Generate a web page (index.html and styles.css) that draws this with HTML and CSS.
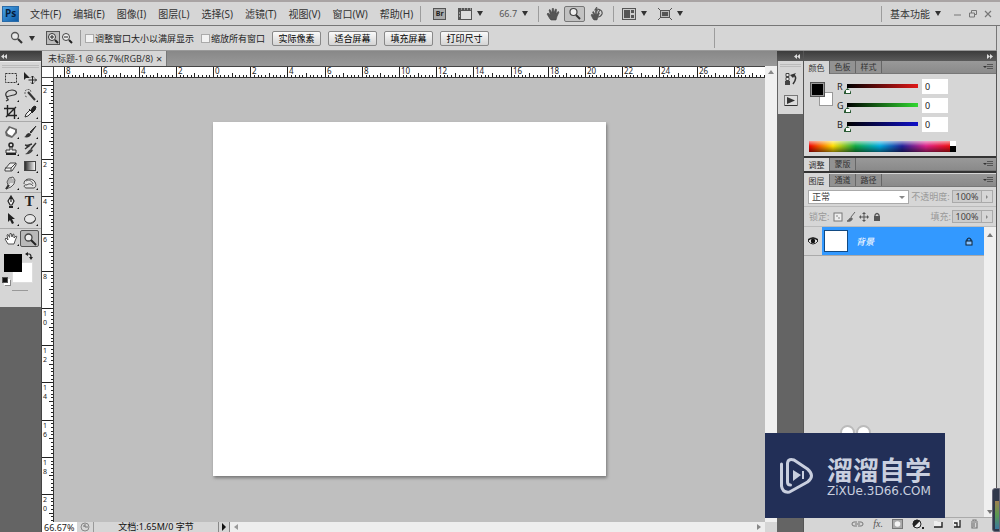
FILE: index.html
```html
<!DOCTYPE html>
<html lang="zh-CN">
<head>
<meta charset="utf-8">
<title>未标题-1 @ 66.7%(RGB/8)</title>
<link rel="stylesheet" href="styles.css">
</head>
<body>
<div class="app">
  <header class="menubar">
    <div class="logo">Ps</div>
    <nav class="menus">
      <button>文件(F)</button><button>编辑(E)</button><button>图像(I)</button><button>图层(L)</button><button>选择(S)</button><button>滤镜(T)</button><button>视图(V)</button><button>窗口(W)</button><button>帮助(H)</button>
    </nav>
    <div class="apptools">
      <i class="vsep"></i>
      <button class="bridge" aria-label="Bridge">Br</button>
      <button class="drop" aria-label="查看额外内容"><svg width="14" height="12" viewBox="0 0 14 12"><rect x=".5" y=".5" width="13" height="11" fill="#ddd" stroke="#555"/><path d="M0 0h14v3H0zM0 3h3v9H0z" fill="#555"/><path d="M3 1h1m2 0h1m2 0h1m2 0h1M1 5h1M1 8h1" stroke="#ddd"/></svg><b class="arrow"></b></button>
      <button class="drop zoomlevel">66.7<b class="arrow"></b></button>
      <i class="vsep"></i>
    </div>
    <div class="viewtools">
      <button aria-label="抓手"><svg width="14" height="14" viewBox="0 0 14 14"><path d="M4 12 1 7l1-1 2.500 2-1.500-5 1-.5L6 6 6.200 1.500h1.300L8 6l1.500-4 1 .4L10 7l2-2.500 1 .6-2 4.400-1 3.500H5z" fill="#555" stroke="#444" stroke-width=".6"/></svg></button>
      <button class="on" aria-label="缩放"><svg width="14" height="14" viewBox="0 0 14 14"><circle cx="5.500" cy="5" r="3.500" fill="#eee" stroke="#444" stroke-width="1.200"/><path d="m8 8 4 4" stroke="#333" stroke-width="2"/></svg></button>
      <button aria-label="旋转视图"><svg width="14" height="14" viewBox="0 0 14 14"><path d="M3 12 1 8l1-1 2 1.500L2.500 5l1-.5L5.500 8 5.500 4h1v4l2-2.500 1 .5L8 10l-1 3H4z" fill="#555" stroke="#444" stroke-width=".5"/><path d="M5 3c3-2 8 0 7 4-1 2-2 3-4 3M7 0 5 3l3 1M10 3 8 6" fill="none" stroke="#555" stroke-width="1.200"/></svg></button>
      <i class="vsep"></i>
    </div>
    <div class="arrange">
      <button class="drop" aria-label="排列文档"><svg width="14" height="12" viewBox="0 0 14 12"><rect x=".5" y=".5" width="13" height="11" fill="#ccc" stroke="#555"/><path d="M2 2h6v8H2zM9 2h3v3H9zM9 7h3v3H9z" fill="#555"/></svg><b class="arrow"></b></button>
      <button class="drop" aria-label="屏幕模式"><svg width="14" height="12" viewBox="0 0 14 12"><rect x="2.500" y="2.500" width="9" height="7" fill="#bbb" stroke="#555"/><path d="M4 4h6v4H4z" fill="#555"/><path d="m0 0 3 3M14 0l-3 3M0 12l3-3M14 12l-3-3" stroke="#555"/></svg><b class="arrow"></b></button>
    </div>
    <div class="wincontrols">
      <i class="vsep"></i>
      <button class="drop workspace-name">基本功能<b class="arrow"></b></button>
      <button class="win" aria-label="最小化"><svg width="8" height="8" viewBox="0 0 8 8"><path d="M0 5h7" stroke="#777"/></svg></button>
      <button class="win" aria-label="还原"><svg width="8" height="8" viewBox="0 0 8 8"><path d="M2.500 3V.5h5v4H6M.5 3h5v4h-5z" fill="none" stroke="#777"/></svg></button>
      <button class="win" aria-label="关闭"><svg width="8" height="8" viewBox="0 0 8 8"><path d="m1 1 6 6M7 1 1 7" stroke="#777" stroke-width="1.200"/></svg></button>
    </div>
  </header>

  <section class="options">
    <button class="drop preset" aria-label="缩放工具预设"><svg width="14" height="14" viewBox="0 0 14 14"><circle cx="5" cy="5" r="3.500" fill="#e8e8e8" stroke="#555" stroke-width="1.300"/><path d="m8 8 4 4" stroke="#333" stroke-width="2.200"/></svg><b class="arrow"></b></button>
    <div class="zoompair">
      <button class="on" aria-label="放大"><svg width="12" height="12" viewBox="0 0 12 12"><circle cx="5" cy="5" r="3.500" fill="#eee" stroke="#333"/><path d="M3 5h4M5 3v4" stroke="#222"/><path d="m8 8 3 3" stroke="#222" stroke-width="2"/></svg></button>
      <button aria-label="缩小"><svg width="12" height="12" viewBox="0 0 12 12"><circle cx="5" cy="5" r="3.500" fill="#eee" stroke="#444"/><path d="M3 5h4" stroke="#222"/><path d="m8 8 3 3" stroke="#222" stroke-width="2"/></svg></button>
    </div>
    <i class="vsep"></i>
    <label class="check"><input type="checkbox">调整窗口大小以满屏显示</label>
    <label class="check second"><input type="checkbox">缩放所有窗口</label>
    <div class="fits"><button>实际像素</button><button>适合屏幕</button><button>填充屏幕</button><button>打印尺寸</button></div>
    <i class="vsep far"></i>
  </section>

  <main class="body">
    <aside class="tools">
      <div class="dockhead"><svg width="6" height="5" viewBox="0 0 6 5"><path d="m3 0-3 2.500 3 2.500zM6 0 3 2.500 6 5z" fill="#ddd"/></svg></div>
      <div class="toolpanel">
        <i class="grip"></i>
        <div class="toolgroup">
          <button class="more" aria-label="矩形选框"><svg viewBox="0 0 14 14"><rect x="1.500" y="2.500" width="11" height="9" fill="none" stroke="#333" stroke-dasharray="2 1"/></svg></button>
          <button aria-label="移动"><svg viewBox="0 0 14 14"><path d="M1 1v8l2-2h4z" fill="#222"/><path d="M9.500 5v8M5.500 9h8M8 6.500 9.500 5 11 6.500M8 11.500 9.500 13 11 11.500M12 7.500 13.500 9 12 10.500" fill="none" stroke="#222"/></svg></button>
          <button class="more" aria-label="套索"><svg viewBox="0 0 14 14"><path d="M3 9C0 6 3 2 8 2s6 4 2 5-6 1-7 2c-1 2 2 2 1 3l-2 1" fill="none" stroke="#333" stroke-width="1.200"/></svg></button>
          <button class="more" aria-label="魔棒"><svg viewBox="0 0 14 14"><path d="m5 4 7 8" stroke="#333" stroke-width="2"/><path d="M2 6V3l2-1.500h3L8 4M2 8l2 1" fill="none" stroke="#666" stroke-dasharray="2 1"/></svg></button>
          <button class="more" aria-label="裁剪"><svg viewBox="0 0 14 14"><path d="M3.500 0v10.500H13M0 3.500h10.500V14M2 12 12 2" fill="none" stroke="#222" stroke-width="1.400"/></svg></button>
          <button class="more" aria-label="吸管"><svg viewBox="0 0 14 14"><path d="m2 12 1-3 4-4 2 2-4 4z" fill="#eee" stroke="#333"/><path d="m6 4 4 4M8 5l2-3 2-1 1 1-1 3-2 2z" fill="#222" stroke="#222"/></svg></button>
        </div>
        <div class="toolgroup">
          <button class="more" aria-label="修复画笔"><svg viewBox="0 0 14 14"><path d="m1 7 4-6 8 3v4l-5 5-6-2z" fill="#666"/><path d="m3 7 3-4 5 2v2l-3 4-4-2z" fill="#fff"/></svg></button>
          <button class="more" aria-label="画笔"><svg viewBox="0 0 14 14"><path d="M13 1 7 7l1 1z" fill="#444" stroke="#333"/><path d="M1 12c2 0 2-4 5-4l2 1c0 3-4 4-7 3z" fill="#333"/></svg></button>
          <button class="more" aria-label="仿制图章"><svg viewBox="0 0 14 14"><circle cx="7" cy="3" r="2" fill="#ddd" stroke="#222" stroke-width="1.500"/><path d="M6 5h2v3h4v3H2V8h4z" fill="#eee" stroke="#333"/><path d="M2 12h10" stroke="#222" stroke-width="2"/></svg></button>
          <button class="more" aria-label="历史画笔"><svg viewBox="0 0 14 14"><path d="M13 1 8 7M2 3l4 1-4 3M3 4l6-2" fill="none" stroke="#333" stroke-width="1.400"/><path d="M2 12c2 0 3-4 6-5l2 1c-1 3-5 5-8 4z" fill="#444"/></svg></button>
          <button class="more" aria-label="橡皮擦"><svg viewBox="0 0 14 14"><path d="m1 10 5-6h6v2l-4 6H1z" fill="#eee" stroke="#444"/><path d="m1 9 6 0 5-5M7 9v3" fill="none" stroke="#444"/></svg></button>
          <button class="more" aria-label="渐变"><svg viewBox="0 0 14 14"><defs><linearGradient id="gr"><stop stop-color="#222"/><stop offset="1" stop-color="#fff"/></linearGradient></defs><rect x="1.500" y="2.500" width="11" height="9" fill="url(#gr)" stroke="#444"/></svg></button>
          <button class="more" aria-label="涂抹"><svg viewBox="0 0 14 14"><path d="m2 13 2-4-1-3 2-4 4-1 2 3-1 4-3 3z" fill="#e4e4e4" stroke="#555"/><path d="M5 3v5M7 2v5M9 3v4" stroke="#888"/><path d="m2 13 3-4" stroke="#333" stroke-width="2"/></svg></button>
          <button class="more" aria-label="海绵"><svg viewBox="0 0 14 14"><path d="M1 8c0-5 5-6 9-4 3 2 4 7 1 8H3c-3-1-2-4 1-3 2-2 5-1 6 1" fill="#e4e4e4" stroke="#444"/><path d="M3 5c3-2 6 0 7 3" fill="none" stroke="#666"/></svg></button>
        </div>
        <div class="toolgroup">
          <button class="more" aria-label="钢笔"><svg viewBox="0 0 14 14"><path d="M7 1v6M7 1 4 6l2 4h2l2-4z" fill="#eee" stroke="#222" stroke-width="1.200"/><path d="M5 12h4" stroke="#222" stroke-width="2"/></svg></button>
          <button class="more type" aria-label="文字">T</button>
          <button class="more" aria-label="路径选择"><svg viewBox="0 0 14 14"><path d="M4 1v9l2-2 2 4 2-1-2-4h3z" fill="#222"/></svg></button>
          <button class="more" aria-label="椭圆"><svg viewBox="0 0 14 14"><ellipse cx="7" cy="7" rx="5.500" ry="4.500" fill="#e8e8e8" stroke="#444"/><path d="M3 10q5 3 9-2" fill="none" stroke="#555"/></svg></button>
        </div>
        <div class="toolgroup">
          <button class="more" aria-label="抓手工具"><svg viewBox="0 0 14 14"><path d="M4 12 1 7l1-1 2 2-1-5 1-.6 1.500 3L6 1.500h1.200L8 5l1-3 1 .4V6l2-2 .8.500L11 9l-1 3z" fill="#fff" stroke="#444" stroke-width=".9"/></svg></button>
          <button class="on" aria-label="缩放工具"><svg viewBox="0 0 14 14"><circle cx="5.500" cy="5.500" r="3.500" fill="#eee" stroke="#444" stroke-width="1.300"/><path d="m8 8 5 5" stroke="#222" stroke-width="2"/></svg></button>
        </div>
        <div class="colors">
          <i class="bg"></i><i class="fg"></i>
          <svg class="swap" width="8" height="8" viewBox="0 0 8 8"><path d="M1 2h3q2 0 2 3" fill="none" stroke="#222" stroke-width="1.200"/><path d="M3 0v4L0 2zM4 5h4L6 8z" fill="#222"/></svg>
          <i class="mini"></i>
        </div>
        <i class="maskline"></i>
      </div>
    </aside>

    <section class="document">
      <div class="tabs"><div class="doctab">未标题-1 @ 66.7%(RGB/8)<button aria-label="关闭文档">×</button></div></div>
      <div class="docgrid">
        <div class="corner"></div>
        <svg class="ruler hruler" id="hruler"></svg>
        <svg class="ruler vruler" id="vruler"></svg>
        <div class="stage"><div class="sheet" id="sheet"></div></div>
        <div class="scroll vscroll"><svg width="6" height="4" viewBox="0 0 6 4"><path d="M0 4 3 0l3 4z" fill="#888"/></svg></div>
      </div>
      <footer class="status">
        <input class="pct" value="66.67%" aria-label="显示比例">
        <svg class="clock" width="10" height="10" viewBox="0 0 10 10"><circle cx="5" cy="5" r="4" fill="none" stroke="#888"/><path d="M5 2v3h3M3 4h2" fill="none" stroke="#777"/></svg>
        <div class="docsize">文档:1.65M/0 字节</div>
        <button class="play" aria-label="状态栏选项"><svg width="4" height="8" viewBox="0 0 4 8"><path d="m0 0 4 4-4 4z" fill="#111"/></svg></button>
        <div class="hscroll"><svg width="4" height="6" viewBox="0 0 4 6"><path d="M4 0 0 3l4 3z" fill="#999"/></svg><svg width="4" height="6" viewBox="0 0 4 6"><path d="m0 0 4 3-4 3z" fill="#888"/></svg></div>
      </footer>
    </section>

    <aside class="icondock">
      <div class="dockhead right"><svg width="6" height="5" viewBox="0 0 6 5"><path d="m3 0-3 2.500 3 2.500zM6 0 3 2.500 6 5z" fill="#ddd"/></svg></div>
      <div class="iconpanel">
        <i class="grip"></i>
        <button aria-label="历史记录"><svg width="12" height="14" viewBox="0 0 12 14"><path d="M1 1.500h3v3H1zM1 5.500h3v3H1z" fill="#eee" stroke="#444"/><path d="M0 9h5v4H0z" fill="#444"/><path d="M8 3c4 1 3 5 0 9" fill="none" stroke="#333" stroke-width="1.500"/><path d="M5 3 11 1 8 6z" fill="#333"/></svg></button>
        <button aria-label="动作"><svg width="14" height="11" viewBox="0 0 14 11"><rect x=".5" y=".5" width="13" height="10" fill="#ddd" stroke="#777"/><path d="m3 2 8 3.500L3 9z" fill="#333"/><path d="M1 10.500h12" stroke="#333"/></svg></button>
      </div>
    </aside>

    <aside class="panels">
      <div class="dockhead right"><svg width="6" height="5" viewBox="0 0 6 5"><path d="m0 0 3 2.500L0 5zM3 0l3 2.500L3 5z" fill="#ddd"/></svg></div>
      <section class="panel">
        <div class="ptabs"><button class="active">颜色</button><button>色板</button><button>样式</button><svg class="pmenu" width="10" height="6" viewBox="0 0 10 6"><path d="M0 2h4L2 4z" fill="#333"/><path d="M4 .5h6M4 2.500h6M4 4.500h6" stroke="#555"/></svg></div>
        <div class="colorbody">
          <div class="swatches"><i class="bg"></i><i class="fg"></i></div>
          <div class="sliders">
            <div class="srow"><label for="r">R</label><input id="r" class="red" type="range" min="0" max="255" value="0"><input type="text" value="0" aria-label="R 值"></div>
            <div class="srow"><label for="g">G</label><input id="g" class="green" type="range" min="0" max="255" value="0"><input type="text" value="0" aria-label="G 值"></div>
            <div class="srow"><label for="b">B</label><input id="b" class="blue" type="range" min="0" max="255" value="0"><input type="text" value="0" aria-label="B 值"></div>
          </div>
        </div>
        <div class="spectrum"><i class="hues"></i><i class="ends"></i></div>
      </section>
      <section class="panel">
        <div class="ptabs"><button class="active">调整</button><button>蒙版</button><svg class="pmenu" width="10" height="6" viewBox="0 0 10 6"><path d="M0 2h4L2 4z" fill="#333"/><path d="M4 .5h6M4 2.500h6M4 4.500h6" stroke="#555"/></svg></div>
      </section>
      <section class="panel layers">
        <div class="ptabs"><button class="active">图层</button><button>通道</button><button>路径</button><svg class="pmenu" width="10" height="6" viewBox="0 0 10 6"><path d="M0 2h4L2 4z" fill="#333"/><path d="M4 .5h6M4 2.500h6M4 4.500h6" stroke="#555"/></svg></div>
        <div class="lrow">
          <div class="selectwrap"><select aria-label="混合模式"><option>正常</option></select></div>
          <label for="op">不透明度:</label><div class="stepper"><input id="op" type="text" value="100%"><button aria-label="调整不透明度"></button></div>
        </div>
        <div class="lrow locks">
          <span class="dim">锁定:</span>
          <svg width="10" height="10" viewBox="0 0 10 10"><rect x="1" y="1" width="8" height="8" fill="#eee" stroke="#777"/><path d="M3 3h2v2H3zM5 5h2v2H5z" fill="#bbb"/></svg>
          <svg width="10" height="10" viewBox="0 0 10 10"><path d="M9 0 5 5M1 9c2 0 2-4 5-3 1 2-2 4-5 3z" fill="#666" stroke="#666"/></svg>
          <svg width="10" height="10" viewBox="0 0 10 10"><path d="M5 1v8M1 5h8" stroke="#555"/><path d="M5 0 3 2h4zM5 10 3 8h4zM0 5l2-2v4zM10 5 8 3v4z" fill="#555"/></svg>
          <svg width="10" height="10" viewBox="0 0 10 10"><path d="M3 5V3q2-3 4 0v2" fill="none" stroke="#555" stroke-width="1.300"/><path d="M2 4h6v5H2z" fill="#555"/></svg>
          <label class="fill" for="fi">填充:</label><div class="stepper"><input id="fi" type="text" value="100%"><button aria-label="调整填充"></button></div>
        </div>
        <div class="listwrap">
          <div class="list">
            <div class="layer">
              <button class="eye" aria-label="可见性"><svg width="10" height="8" viewBox="0 0 10 8"><path d="M0 4q5-6 10 0-5 6-10 0z" fill="#fff" stroke="#222"/><circle cx="5" cy="4" r="2.300" fill="#111"/><path d="M0 3q5-4 10 0" fill="none" stroke="#222" stroke-width="1.500"/></svg></button>
              <div class="layerbody"><i class="thumb"></i><em>背景</em><svg width="8" height="9" viewBox="0 0 8 9"><path d="M2 4V2.500q2-3 4 0V4" fill="none" stroke="#123" stroke-width="1.200"/><rect x="1" y="4" width="6" height="4" fill="#8bc4ff" stroke="#123"/></svg></div>
            </div>
          </div>
          <div class="scroll lscroll"><svg width="6" height="4" viewBox="0 0 6 4"><path d="M0 4 3 0l3 4z" fill="#777"/></svg><svg width="6" height="4" viewBox="0 0 6 4"><path d="m0 0 3 4 3-4z" fill="#777"/></svg></div>
        </div>
        <div class="lfoot">
          <svg width="13" height="10" viewBox="0 0 13 10"><path d="M6 3H3Q1 3 1 5t2 2h3M7 3h3q2 0 2 2t-2 2H7M4 5h5" fill="none" stroke="#777"/></svg>
          <span class="fx">fx.</span>
          <svg width="11" height="10" viewBox="0 0 11 10"><rect x=".5" y=".5" width="10" height="9" fill="#aaa" stroke="#777"/><circle cx="5.500" cy="5" r="2.800" fill="#f4f4f4"/></svg>
          <svg width="12" height="10" viewBox="0 0 12 10"><circle cx="5" cy="5" r="4" fill="#eee" stroke="#222"/><path d="M2 8A4 4 0 0 1 8 2z" fill="#222"/><path d="M10 8h2v2h-2z" fill="#222"/></svg>
          <svg width="10" height="8" viewBox="0 0 10 8"><path d="M1 1h3l1 1h4v5H1z" fill="#eee"/><path d="M1 7h8V2" fill="none" stroke="#222" stroke-width="1.400"/></svg>
          <svg width="9" height="9" viewBox="0 0 9 9"><path d="M1 1h7v7H5L1 5z" fill="#eee"/><path d="M8 1v7H2M5 8V4H2" fill="none" stroke="#222" stroke-width="1.300"/></svg>
          <svg width="9" height="10" viewBox="0 0 9 10"><path d="M1 3h7M3 2V1h3v1M2 4v5h5V4M4 4v4" fill="none" stroke="#777" stroke-width="1.200"/></svg>
        </div>
      </section>
    </aside>
  </main>

  <div class="ears"><i></i><i></i></div>
  <div class="brand">
    <svg width="36" height="38" viewBox="0 0 36 38"><g fill="none" stroke="#c9cfdf" stroke-width="3" stroke-linecap="round" stroke-linejoin="round"><path d="M2.500 7v22q1 7 8 6l18-10q8-6 0-13L15 3Q8 1 8.500 8v17q0 3 3 3"/></g><path d="m14 13 8 5-8 6zM23 14h2v8h-2z" fill="#c9cfdf"/></svg>
    <div class="brandtext"><strong>溜溜自学</strong><span>ZiXUe.3D66.COM</span></div>
  </div>
  <div class="gadget"><i></i></div>
</div>
<script src="rulers.js"></script>
</body>
</html>
```

FILE: styles.css
```css
* { box-sizing: border-box; }
body { margin: 0; font: 9px/1 "Noto Sans", "Noto Sans CJK SC", sans-serif; color: #222; overflow: hidden; }
button, input, select { font: inherit; color: inherit; margin: 0; padding: 0; border: 0; background: none; border-radius: 0; line-height: 1; }
svg { display: block; flex: none; }
i { display: block; }
.app { position: relative; height: 100vh; display: flex; flex-direction: column; background: #d6d6d6; padding-right: 3px; }

.menubar { flex: none; height: 26px; display: flex; align-items: center; border-top: 2px solid #a9a4a4; border-bottom: 1px solid #777; padding-left: 2px; margin-right: -3px; }
.menubar, .menubar button { white-space: nowrap; }
.logo { width: 17px; height: 16px; background: linear-gradient(135deg, #4aa3e6, #0d5aa5); border: 1px solid #2a6ba8; color: #061e3c; font: bold 10px/13px "Open Sans", sans-serif; text-align: center; }
.menus { display: flex; gap: 12px; margin-left: 11px; font-size: 10px; color: #333; }
.vsep { width: 1px; height: 16px; background: #9c9c9c; flex: none; }
.arrow { width: 0; height: 0; border: 3px solid transparent; border-top: 5px solid #333; border-bottom: 0; }
.apptools, .viewtools, .arrange, .wincontrols, .drop { display: flex; align-items: center; }
.drop { gap: 5px; }
.apptools { margin-left: 7px; gap: 12px; }
.bridge { width: 13px; height: 12px; border: 1px solid #555; background: #aaa; font-size: 7px; font-weight: bold; }
.zoomlevel { color: #555; margin-left: 4px; }
.viewtools { gap: 4px; margin-left: 6px; }
.apptools .vsep:last-child { margin-left: -2px; }
.viewtools button { height: 16px; width: 15px; display: grid; place-items: center; }
.viewtools button.on { width: 21px; border: 1px solid #777; background: #c2c2c2; border-radius: 2px; }
.viewtools .vsep { margin-left: 5px; }
.arrange { gap: 11px; margin-left: 8px; }
.wincontrols { margin-left: auto; padding-right: 8px; gap: 8px; }
.workspace-name { font-size: 10px; color: #333; margin-right: 5px; }
.win { width: 8px; }
.win + .win { margin-left: -1px; }

.options { flex: none; height: 25px; display: flex; align-items: center; padding-left: 10px; border-bottom: 1px solid #999; border-right: 1px solid #777; white-space: nowrap; }
.zoompair { display: flex; align-items: center; margin: 0 6px 0 11px; }
.zoompair button { width: 14px; height: 14px; display: grid; place-items: center; }
.zoompair .on { border: 1px solid #555; background: #bbb; }
.check { display: flex; align-items: center; gap: 1px; margin-left: 4px; }
.check.second { margin-left: 7px; }
.check input { appearance: none; width: 9px; height: 9px; border: 1px solid #aaa; background: #f2f2f2; }
.fits { display: flex; gap: 7px; margin-left: 7px; }
.fits button { width: 49px; height: 15px; border: 1px solid #888; border-radius: 2px; background: linear-gradient(#fafafa, #d4d4d4); color: #000; }
.options .far { margin-left: 225px; height: 20px; }

.body { flex: 1; min-height: 0; display: flex; }
.dockhead { flex: none; height: 10px; background: linear-gradient(#3c3c3c, #5a5a5a); display: flex; align-items: center; padding: 0 1px; }
.dockhead.right { justify-content: flex-end; padding-right: 3px; }
.tools { width: 41px; flex: none; background: #646464; }
.toolpanel { background: #d6d6d6; padding-bottom: 16px; border-top: 1px solid #eee; }
.grip { height: 3px; margin: 3px 2px 0; border: solid #bbb; border-width: 1px 0; }
.toolpanel .grip { margin-bottom: 1px; }
.toolgroup { display: grid; grid-template-columns: 19px 19px; grid-auto-rows: 17px; padding: 0 0 1px 1px; border-bottom: 1px solid #aaa; }
.toolgroup button { position: relative; display: grid; place-items: center; }
.toolgroup svg { width: 14px; height: 14px; }
.toolgroup .more::after { content: ""; position: absolute; right: 1px; bottom: 1px; border: 1px solid transparent; border-right-color: #111; border-bottom-color: #111; }
.toolgroup .on { border: 1px solid #555; background: #b9b9b9; border-radius: 2px; }
.toolgroup .type { font: bold 14px/1 "Liberation Serif", serif; }
.toolgroup:nth-of-type(4) { border-bottom: 0; padding-top: 1px; }
.toolgroup:nth-of-type(2) { padding-top: 1px; }
.colors { position: relative; height: 34px; margin-top: 3px; }
.colors i, .colors svg, .swatches i { position: absolute; }
.colors .fg { left: 4px; top: 3px; width: 18px; height: 18px; background: #000; }
.colors .bg { left: 12px; top: 11px; width: 21px; height: 21px; background: #fff; border: 1px solid #ddd; }
.swap { left: 25px; top: 1px; }
.mini { left: 2px; top: 26px; width: 6px; height: 6px; background: #111; border: 1px solid #555; box-shadow: 2px 2px #fff, 3px 3px #888; }
.maskline { height: 1px; width: 16px; margin: 5px 0 0 12px; background: #999; }

.document { flex: 1; min-width: 0; display: flex; flex-direction: column; border-left: 1px solid #444; }
.tabs { flex: none; height: 15px; background: linear-gradient(#888, #999); display: flex; }
.doctab { display: flex; align-items: center; background: #d6d6d6; padding: 0 4px 0 6px; gap: 3px; border-right: 1px solid #777; color: #333; white-space: nowrap; }
.doctab button { font-size: 11px; }
.docgrid { flex: 1; min-height: 0; display: grid; grid-template: 12px 1fr / 12px 1fr 12px; }
.corner { background: #fff; border: solid #444; border-width: 1px 1px 1px 0; }
.ruler { width: 100%; height: 100%; background: #fff; overflow: hidden; font: 8px "Noto Sans", sans-serif; fill: #222; }
.ruler path { stroke: #222; fill: none; shape-rendering: crispEdges; }
.hruler { border-top: 1px solid #444; border-bottom: 1px solid #333; }
.vruler { border-right: 1px solid #333; grid-row: 2; grid-column: 1; }
.vruler text { font-size: 7px; }
.stage { grid-row: 2; grid-column: 2; background: #bfbfbf; display: flex; align-items: center; justify-content: center; overflow: hidden; padding-bottom: 2px; }
.sheet { width: 393px; height: 354px; flex: none; background: #fff; box-shadow: 1px 2px 3px #777; }
.scroll { background: #f0f0f0; }
.vscroll { grid-row: 1 / 3; grid-column: 3; display: flex; justify-content: center; padding-top: 4px; }
.status { flex: none; height: 10px; display: flex; align-items: center; background: #d6d6d6; overflow: hidden; }
.pct { width: 35px; height: 10px; background: #fff; padding-left: 2px; }
.clock { margin: 0 3px 0 3px; }
.docsize { width: 125px; height: 10px; line-height: 10px; text-align: center; border-left: 1px solid #999; color: #111; }
.play { width: 12px; height: 10px; display: grid; place-items: center; border: solid #888; border-width: 0 1px; }
.hscroll { flex: 1; height: 10px; background: #eee; display: flex; align-items: center; justify-content: space-between; padding: 0 4px; margin-right: 12px; }

.icondock { width: 26px; flex: none; background: #646464; display: flex; flex-direction: column; }
.iconpanel { height: 53px; background: #d6d6d6; margin-left: 1px; display: flex; flex-direction: column; align-items: center; }
.iconpanel .grip { align-self: stretch; }
.iconpanel button { margin-top: 5px; }
.iconpanel button + button { margin-top: 9px; }

.panels { width: 194px; flex: none; border: solid #555; border-width: 0 1px; display: flex; flex-direction: column; }
.panel { flex: none; border-bottom: 2px solid #333; }
.ptabs { height: 13px; background: linear-gradient(#999, #8a8a8a); display: flex; border-bottom: 1px solid #777; }
.ptabs button { width: 26px; font-size: 8px; border-right: 1px solid #666; color: #333; background: #929292; white-space: nowrap; }
.ptabs .active { background: #d6d6d6; height: 13px; }
.pmenu { margin: 3px 3px 0 auto; }
.colorbody { display: flex; padding: 5px 0 0 6px; }
.swatches { position: relative; width: 27px; height: 28px; }
.swatches .fg { top: 3px; left: 0; width: 15px; height: 15px; background: #000; border: 1px solid #555; box-shadow: inset 0 0 0 1px #999; }
.swatches .bg { top: 13px; left: 9px; width: 14px; height: 14px; background: #fff; border: 1px solid #999; }
.sliders { display: flex; flex-direction: column; gap: 4px; }
.srow { display: flex; align-items: center; height: 15px; }
.srow label { width: 7px; }
.srow input[type="text"] { width: 26px; height: 15px; background: #fff; padding-left: 3px; margin-left: 1px; }
.srow input[type="range"] { appearance: none; width: 77px; height: 15px; background-repeat: no-repeat; background-position: 3px 5px; background-size: 71px 4px; }
.srow .red { background-image: linear-gradient(90deg, #000, #e01818); }
.srow .green { background-image: linear-gradient(90deg, #000, #30d830); }
.srow .blue { background-image: linear-gradient(90deg, #000, #1010c8); }
.srow input::-webkit-slider-thumb { appearance: none; width: 7px; height: 6px; margin-top: 9px; background: linear-gradient(#fff, #fff) center 2px / 4px 3px no-repeat, #2b5b35; clip-path: polygon(50% 0, 100% 60%, 100% 100%, 0 100%, 0 60%); }
.spectrum { display: flex; width: 147px; height: 11px; margin: 9px 0 4px 5px; }
.hues { flex: 1; background: linear-gradient(rgba(255,255,255,.6), transparent 45%, rgba(0,0,0,.5)), linear-gradient(90deg, #e00, #fd0 17%, #1a4 33%, #0ad 50%, #229 66%, #d28 83%, #e11); }
.ends { width: 6px; background: linear-gradient(#fff 50%, #000 50%); }
.layers { flex: 1; min-height: 0; display: flex; flex-direction: column; border: 0; margin-top: 1px; }
.layers .ptabs, .lrow, .lfoot { flex: none; }
.lrow { height: 20px; display: flex; align-items: center; justify-content: space-between; padding: 0 3px 0 4px; color: #999; border-bottom: 1px solid #bbb; white-space: nowrap; }
.selectwrap { position: relative; width: 101px; height: 14px; background: #fff; border: 1px solid #aaa; }
.selectwrap::after { content: ""; position: absolute; right: 3px; top: 5px; border: 3px solid transparent; border-top: 3px solid #888; border-bottom: 0; }
.selectwrap select { appearance: none; width: 100%; height: 12px; padding-left: 3px; color: #444; display: block; }
.stepper { display: flex; height: 13px; border: 1px solid #aaa; }
.stepper input { width: 28px; text-align: center; background: #ccc; color: #444; }
.stepper button { width: 11px; border-left: 1px solid #aaa; display: grid; place-items: center; }
.stepper button::after { content: ""; border: 2px solid transparent; border-left-color: #888; border-right: 0; }
.locks { justify-content: flex-start; gap: 4px; padding-left: 5px; }
.locks .fill { margin-left: auto; }
.locks .stepper { margin-left: -3px; }
.locks svg + svg { margin-left: -1px; }
.listwrap { flex: 1; min-height: 0; display: flex; }
.list { flex: 1; }
.layer { display: flex; height: 29px; border-bottom: 1px solid #aaa; }
.eye { width: 18px; display: grid; place-items: center; }
.layerbody { flex: 1; background: #3399ff; display: flex; align-items: center; padding: 0 11px 0 2px; color: #fff; }
.layerbody em { margin-left: 8px; }
.layerbody svg { margin-left: auto; }
.thumb { width: 24px; height: 22px; background: #fff; border: 1px solid #124a82; }
.lscroll { width: 12px; display: flex; flex-direction: column; justify-content: space-between; align-items: center; padding: 6px 0 3px; }
.lfoot { height: 15px; border-top: 1px solid #aaa; display: flex; align-items: center; justify-content: flex-end; gap: 9px; padding: 0 17px 3px 0; }
.fx { font: italic 10px/10px "Liberation Serif", serif; color: #555; }

.ears { position: absolute; right: 129px; bottom: 92px; display: flex; gap: 1px; }
.ears i { width: 15px; height: 15px; border: 2px solid #bbb; border-radius: 50%; background: #fff; }
.brand { position: absolute; right: 55px; bottom: 14px; width: 180px; height: 85px; background: #222f57; color: #c9cfdf; display: flex; align-items: center; padding-left: 14px; gap: 12px; }
.brandtext { display: flex; flex-direction: column; gap: 3px; white-space: nowrap; }
.brandtext strong { font: 700 26px/27px "Noto Sans CJK SC", sans-serif; }
.brandtext span { font: 12px/12px "DejaVu Sans", sans-serif; }
.gadget { position: absolute; right: 0; bottom: 0; width: 8px; height: 44px; background: #30384a; border: 1px solid #667; border-radius: 3px 0 0 3px; padding: 12px 0 2px 2px; }
.gadget i { height: 100%; background: linear-gradient(#a08050, #5a9a50 50%, #3a78a0); }
```

FILE: rulers.js
```js
const STEP = 37.2; // pixels between labelled marks (two units)

function drawRulers() {
  const sheet = document.getElementById('sheet').getBoundingClientRect();
  draw(document.getElementById('hruler'), sheet.left, false);
  draw(document.getElementById('vruler'), sheet.top, true);
}

function draw(ruler, start, vertical) {
  const box = ruler.getBoundingClientRect();
  const origin = start - (vertical ? box.top : box.left);
  const length = vertical ? box.height : box.width;
  const first = Math.floor(-origin / STEP);
  const last = Math.ceil((length - origin) / STEP);
  const base = vertical ? 11 : 10;
  let path = '';
  let labels = '';
  for (let n = first; n <= last; n++) {
    for (let k = 0; k < 10; k++) {
      const p = Math.round(origin + (n + k / 10) * STEP) + 0.5;
      const size = k === 0 ? base : k === 5 ? 4 : 2;
      path += vertical ? `M${base - size} ${p}H${base}` : `M${p} ${base - size}V${base}`;
    }
    const at = Math.round(origin + n * STEP);
    if (at < 0 || at + 12 > length) continue;
    const text = String(Math.abs(n * 2));
    if (vertical) {
      [...text].forEach((c, i) => {
        labels += `<text x="1" y="${at + 8 + i * 9}">${c}</text>`;
      });
    } else {
      labels += `<text x="${at + 2}" y="7">${text}</text>`;
    }
  }
  ruler.innerHTML = `<path d="${path}"/>${labels}`;
}

drawRulers();
window.addEventListener('resize', drawRulers);
```
